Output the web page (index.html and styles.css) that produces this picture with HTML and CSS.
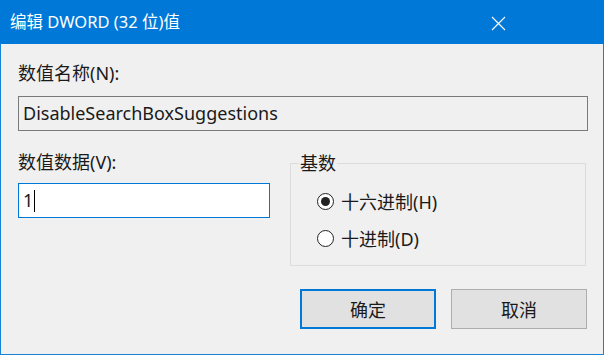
FILE: index.html
```html
<!DOCTYPE html>
<html lang="zh-CN">
  <head>
    <meta charset="UTF-8" />
    <title>编辑 DWORD (32 位)值</title>
    <link rel="stylesheet" href="styles.css">
  </head>
  <body>
    <div class="window">
      <!-- Title bar -->
      <div class="titlebar">
        <span class="title">编辑 DWORD (32 位)值</span>
        <span class="close">
          <svg width="15" height="15" viewBox="0 0 15 15">
            <path d="M1 1 L14 14 M14 1 L1 14" stroke="#fff" stroke-width="1.1" fill="none" />
          </svg>
        </span>
      </div>

      <div class="content">
        <div class="label name-label">数值名称(N):</div>
        <div class="field readonly">DisableSearchBoxSuggestions</div>

        <div class="middle">
          <div class="data-col">
            <div class="label">数值数据(V):</div>
            <div class="field edit">1<span class="caret"></span></div>
          </div>

          <fieldset class="group">
            <legend>基数</legend>
            <div class="radio checked"><span class="dot"></span>十六进制(H)</div>
            <div class="radio"><span class="dot"></span>十进制(D)</div>
          </fieldset>
        </div>

        <div class="buttons">
          <div class="button default">确定</div>
          <div class="button">取消</div>
        </div>
      </div>
    </div>
  </body>
</html>
```

FILE: styles.css
```css
/* Basic Reset */
* {
  margin: 0;
  padding: 0;
  box-sizing: border-box;
}

body {
  font-family: "Noto Sans", "Noto Sans CJK SC", sans-serif;
  font-size: 18px;
  color: #1a1a1a;
  background-color: #f0f0f0;
}

.window {
  width: 604px;
  height: 355px;
  border: 1px solid #1a82d4;
  border-top: none;
  background-color: #f0f0f0;
}

/* Title bar */
.titlebar {
  height: 44px;
  margin: 0 -1px;
  background-color: #0078d7;
  color: white;
  display: flex;
  align-items: center;
  justify-content: space-between;
  padding: 0 98px 0 10px;
}

.title {
  font-size: 16.5px;
  margin-top: -2px;
}

.close {
  display: flex;
  margin-top: 2px;
}

.content {
  padding: 19px 15px 0 17px;
}

.label {
  height: 20px;
  line-height: 20px;
}

.field {
  height: 35px;
  border: 1px solid #7a7a7a;
  padding-left: 4px;
  line-height: 33px;
  display: flex;
  align-items: center;
}

.field.readonly {
  margin-top: 13px;
  background-color: #f0f0f0;
}

.middle {
  display: grid;
  grid-template-columns: 252px 296px;
  column-gap: 20px;
  margin-top: 21px;
}

.field.edit {
  margin-top: 11px;
  background-color: white;
  border-color: #0078d7;
}

.caret {
  display: inline-block;
  width: 1px;
  height: 22px;
  margin-left: 1px;
  background-color: #000;
}

/* Group box */
.group {
  border: 1px solid #dcdcdc;
  margin-top: 1px;
  height: 113px;
  padding: 17px 0 0 8px;
}

.group legend {
  padding: 0 1px;
  line-height: 20px;
}

.radio {
  display: flex;
  align-items: center;
  height: 22px;
  margin-left: 18px;
  margin-bottom: 15px;
}

.radio .dot {
  width: 17px;
  height: 17px;
  border: 1px solid #222;
  border-radius: 50%;
  background-color: white;
  margin-right: 7px;
  display: flex;
  align-items: center;
  justify-content: center;
}

.radio.checked .dot::after {
  content: "";
  width: 9px;
  height: 9px;
  border-radius: 50%;
  background-color: #222;
}

/* Buttons */
.buttons {
  display: flex;
  justify-content: flex-end;
  gap: 15px;
  margin-top: 23px;
  padding-right: 1px;
}

.button {
  width: 136px;
  height: 40px;
  background-color: #e1e1e1;
  border: 1px solid #adadad;
  display: flex;
  align-items: center;
  justify-content: center;
}

.button.default {
  border: 2px solid #0078d7;
}
```
